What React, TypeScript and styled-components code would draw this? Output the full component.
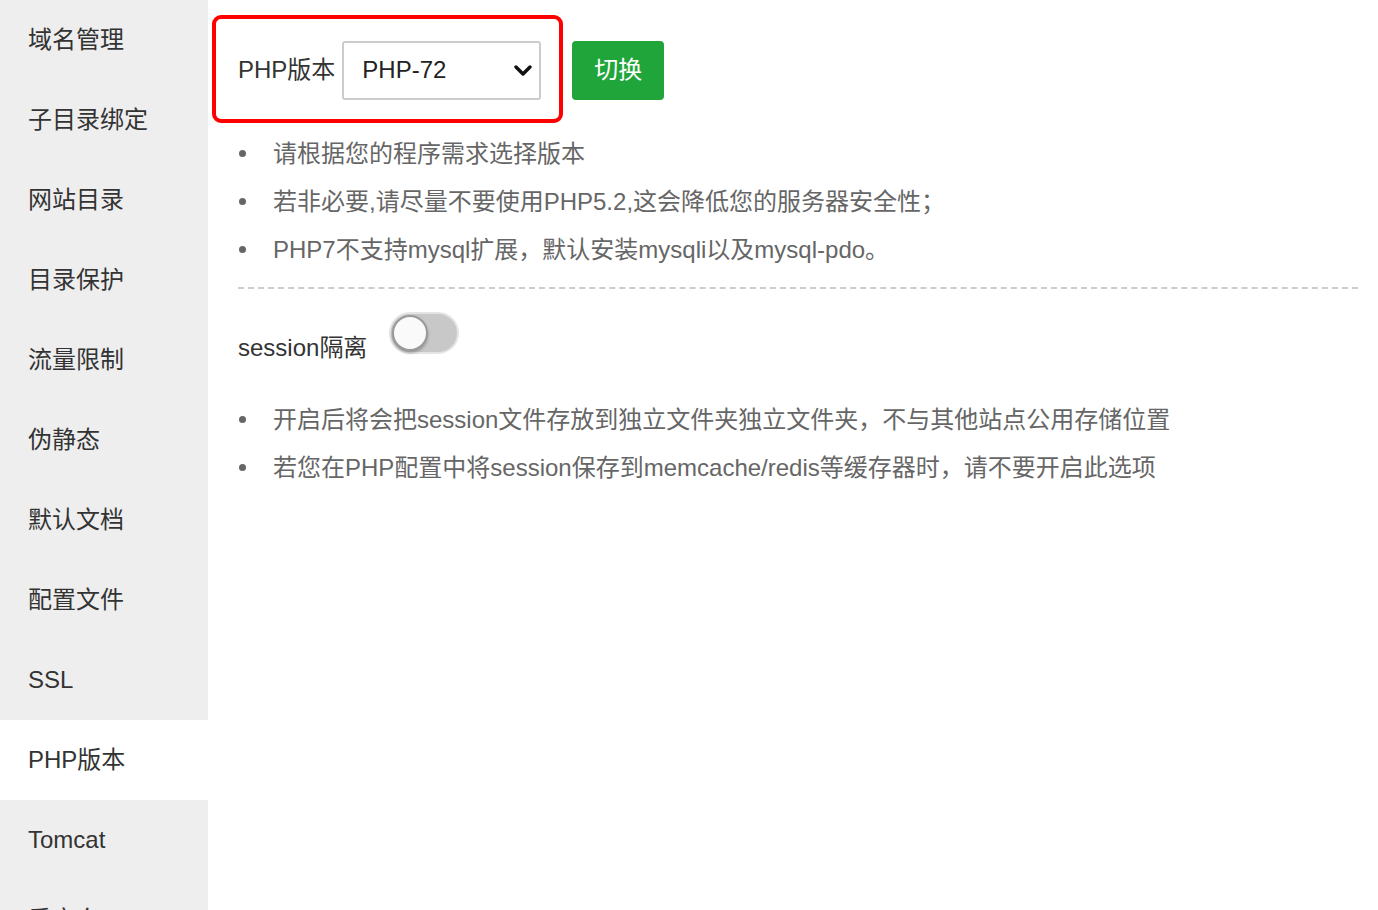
import React from 'react';
import styled, { createGlobalStyle } from 'styled-components';

const GlobalStyle = createGlobalStyle`
  html, body {
    margin: 0;
    padding: 0;
    background: #fff;
    overflow: hidden;
  }
  body {
    font-family: "Liberation Sans", "Noto Sans CJK SC", sans-serif;
    color: #333;
  }
`;

const Page = styled.div`
  display: flex;
  width: 1378px;
  height: 910px;
  overflow: hidden;
`;

const Sidebar = styled.ul`
  width: 208px;
  flex-shrink: 0;
  margin: 0;
  padding: 0;
  list-style: none;
  background: #eee;
`;

const MenuItem = styled.li<{ $active?: boolean }>`
  height: 80px;
  line-height: 80px;
  padding-left: 28px;
  font-size: 24px;
  color: #333;
  background: ${(p) => (p.$active ? '#fff' : 'transparent')};
`;

const Main = styled.div`
  flex: 1;
  padding: 40px 20px 0 30px;
`;

const VersionRow = styled.div`
  position: relative;
  display: flex;
  align-items: center;
  height: 60px;
`;

const Annotation = styled.div`
  position: absolute;
  left: -26px;
  top: -25px;
  width: 343px;
  height: 100px;
  border: 4px solid #f00;
  border-radius: 9px;
  pointer-events: none;
`;

const Label = styled.span`
  font-size: 24px;
  color: #333;
  margin-right: 7px;
  padding-bottom: 5px;
`;

const Select = styled.div`
  position: relative;
  box-sizing: border-box;
  width: 199px;
  height: 59px;
  border: 2px solid #ccc;
  border-radius: 3px;
  padding-left: 18px;
  display: flex;
  align-items: center;
  font-size: 24px;
  color: #222;
`;

const Chevron = styled.svg`
  position: absolute;
  right: 7px;
  top: 50%;
  margin-top: -6px;
`;

const SwitchButton = styled.button`
  margin-left: 31px;
  width: 92px;
  height: 59px;
  border: none;
  border-radius: 4px;
  background: #20a53a;
  color: #fff;
  font-family: inherit;
  font-size: 24px;
  padding: 0 0 5px;
`;

const Tips = styled.ul<{ $top: number }>`
  margin: ${(p) => p.$top}px 0 0;
  padding: 0;
  list-style: none;
`;

const Tip = styled.li`
  display: flex;
  align-items: center;
  height: 48px;
  font-size: 24px;
  color: #666;
  &::before {
    content: '';
    width: 7px;
    height: 7px;
    border-radius: 50%;
    background: #666;
    margin-left: 1px;
    margin-right: 27px;
    margin-top: 4px;
    flex-shrink: 0;
  }
`;

const Divider = styled.div`
  margin-top: 16px;
  border-top: 2px dashed #ccc;
`;

const SessionRow = styled.div`
  display: flex;
  align-items: flex-start;
  margin-top: 23px;
  height: 60px;
`;

const SessionLabel = styled.span`
  font-size: 24px;
  color: #333;
  margin-top: 16px;
  margin-right: 22px;
`;

const Toggle = styled.div`
  position: relative;
  box-sizing: border-box;
  width: 70px;
  height: 42px;
  border-radius: 21px;
  background: #c8c8c8;
  border: 2px solid #e4e4e4;
`;

const Knob = styled.div`
  position: absolute;
  left: 1px;
  top: 1px;
  box-sizing: border-box;
  width: 36px;
  height: 36px;
  border-radius: 50%;
  background: #fafafa;
  border: 2px solid #9a9a9a;
  box-shadow: 0 2px 3px rgba(0, 0, 0, 0.25);
`;

const menu = ['域名管理', '子目录绑定', '网站目录', '目录保护', '流量限制', '伪静态', '默认文档', '配置文件', 'SSL', 'PHP版本', 'Tomcat', '重定向'];

const versionTips = [
  '请根据您的程序需求选择版本',
  '若非必要,请尽量不要使用PHP5.2,这会降低您的服务器安全性；',
  'PHP7不支持mysql扩展，默认安装mysqli以及mysql-pdo。',
];

const sessionTips = [
  '开启后将会把session文件存放到独立文件夹独立文件夹，不与其他站点公用存储位置',
  '若您在PHP配置中将session保存到memcache/redis等缓存器时，请不要开启此选项',
];

export default function App() {
  return (
    <Page>
      <GlobalStyle />
      <Sidebar>
        {menu.map((m) => (
          <MenuItem key={m} $active={m === 'PHP版本'}>
            {m}
          </MenuItem>
        ))}
      </Sidebar>
      <Main>
        <VersionRow>
          <Annotation />
          <Label>PHP版本</Label>
          <Select>
            PHP-72
            <Chevron width="18" height="14" viewBox="0 0 18 14">
              <path d="M2 3 L9 10 L16 3" fill="none" stroke="#111" strokeWidth="3.4" strokeLinecap="round" strokeLinejoin="round" />
            </Chevron>
          </Select>
          <SwitchButton>切换</SwitchButton>
        </VersionRow>
        <Tips $top={27}>
          {versionTips.map((t) => (
            <Tip key={t}>{t}</Tip>
          ))}
        </Tips>
        <Divider />
        <SessionRow>
          <SessionLabel>session隔离</SessionLabel>
          <Toggle>
            <Knob />
          </Toggle>
        </SessionRow>
        <Tips $top={21}>
          {sessionTips.map((t) => (
            <Tip key={t}>{t}</Tip>
          ))}
        </Tips>
      </Main>
    </Page>
  );
}
